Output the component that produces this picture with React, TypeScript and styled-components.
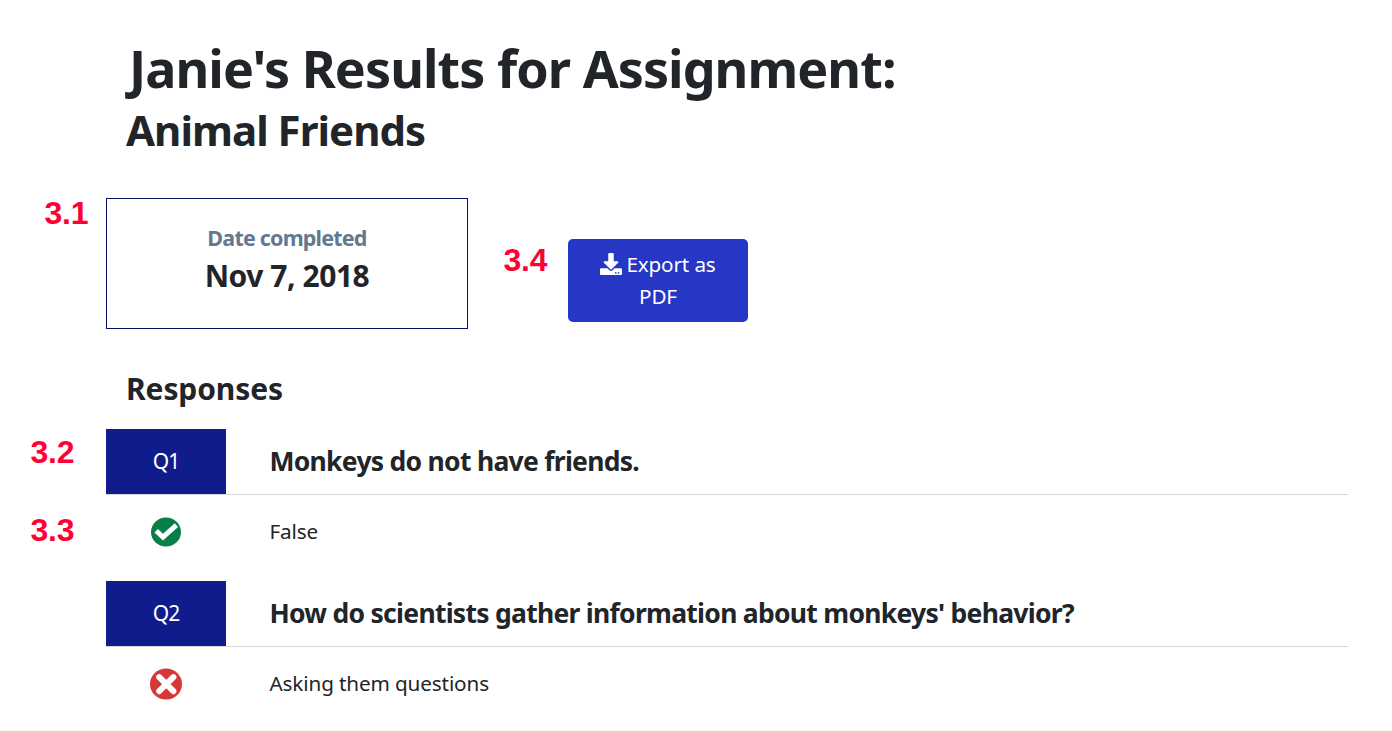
import React from "react";
import { FaDownload } from "react-icons/fa";
import styled, { createGlobalStyle } from "styled-components";

type Response = {
  id: string;
  question: string;
  answer: string;
  correct: boolean;
  questionNote?: string;
  answerNote?: string;
};

const responses: Response[] = [
  {
    id: "Q1",
    question: "Monkeys do not have friends.",
    answer: "False",
    correct: true,
    questionNote: "3.2",
    answerNote: "3.3",
  },
  {
    id: "Q2",
    question: "How do scientists gather information about monkeys' behavior?",
    answer: "Asking them questions",
    correct: false,
  },
];

const CorrectIcon = () => (
  <svg width="30" height="30" viewBox="0 0 30 30" fill="none">
    <ellipse cx="15" cy="15" rx="15" ry="14.6" fill="#087f46" />
    <path d="M5.2 13.8L12 20.2L25.4 8.2" stroke="#fff" strokeWidth="5" />
  </svg>
);

const IncorrectIcon = () => (
  <svg width="32" height="32" viewBox="0 0 32 32" fill="none">
    <ellipse cx="16" cy="16" rx="16" ry="15.6" fill="#d9363a" />
    <path d="M9.2 9.2L23.4 23.2M23.4 9.2L9.2 23.2" stroke="#fff" strokeWidth="6" strokeLinecap="round" />
  </svg>
);

const ResponseItem = ({ response }: { response: Response }) => (
  <Item>
    <Gutter $top={5} $left={30.5}>
      {response.questionNote && <Callout>{response.questionNote}</Callout>}
    </Gutter>
    <QuestionRow>
      <QuestionId>{response.id}</QuestionId>
      <Question>{response.question}</Question>
    </QuestionRow>
    <Gutter $top={17} $left={30.5}>
      {response.answerNote && <Callout>{response.answerNote}</Callout>}
    </Gutter>
    <AnswerRow>
      <Mark>{response.correct ? <CorrectIcon /> : <IncorrectIcon />}</Mark>
      <Answer>{response.answer}</Answer>
    </AnswerRow>
  </Item>
);

const App = () => (
  <>
    <GlobalStyle />
    <Page>
      <Title>Janie's Results for Assignment:</Title>
      <Subtitle>Animal Friends</Subtitle>
      <Summary>
        <Gutter $top={-3} $left={44.5}>
          <Callout>3.1</Callout>
        </Gutter>
        <DateCard>
          <DateLabel>Date completed</DateLabel>
          <DateValue>Nov 7, 2018</DateValue>
        </DateCard>
        <Gutter $top={44} $left={35.5}>
          <Callout>3.4</Callout>
        </Gutter>
        <ExportButton>
          <FaDownload />
          Export as PDF
        </ExportButton>
      </Summary>
      <SectionTitle>Responses</SectionTitle>
      {responses.map((response) => (
        <ResponseItem key={response.id} response={response} />
      ))}
    </Page>
  </>
);

const GlobalStyle = createGlobalStyle`
  * {
    box-sizing: border-box;
  }

  body {
    margin: 0;
    background: #fff;
    color: #212529;
    font-family: "Noto Sans", sans-serif;
  }
`;

const Page = styled.main`
  height: 731px;
  padding: 37px 44px 0 0;
  overflow: hidden;
`;

const Title = styled.h1`
  margin: 0 0 6px 129px;
  font-size: 52px;
  line-height: 62px;
  letter-spacing: -0.93px;
`;

const Subtitle = styled.h2`
  margin: 0 0 43px 126px;
  font-size: 42px;
  line-height: 50px;
  letter-spacing: -0.98px;
`;

const Summary = styled.section`
  display: grid;
  grid-template-columns: 106px 362px 100px 180px;
  height: 131px;
`;

const Gutter = styled.div<{ $top: number; $left: number }>`
  margin-top: ${({ $top }) => $top}px;
  padding-left: ${({ $left }) => $left}px;
`;

const Callout = styled.span`
  display: block;
  color: #ff0033;
  font: bold 32px/36px "Liberation Sans", sans-serif;
  letter-spacing: -0.2px;
`;

const DateCard = styled.div`
  padding-top: 23px;
  border: 1px solid #0a1160;
  text-align: center;
`;

const DateLabel = styled.div`
  margin-bottom: 2px;
  color: #64788f;
  font-size: 21.5px;
  font-weight: 700;
  line-height: 32px;
  letter-spacing: -0.8px;
`;

const DateValue = styled.div`
  font-size: 30px;
  font-weight: 700;
  line-height: 40px;
  letter-spacing: -0.45px;
`;

const ExportButton = styled.button`
  align-self: start;
  height: 83px;
  margin-top: 41px;
  padding: 0 30px 2px;
  border: 0;
  border-radius: 5px;
  background: #2537c4;
  color: #fff;
  font: 400 20.7px/32px "Noto Sans", sans-serif;
  letter-spacing: -0.15px;

  svg {
    width: 22px;
    height: 22px;
    margin-right: 4px;
    vertical-align: -3px;
  }
`;

const SectionTitle = styled.h3`
  margin: 40px 0 20px 126px;
  font-size: 30px;
  line-height: 40px;
  letter-spacing: -0.1px;
`;

const Item = styled.article`
  display: grid;
  grid-template-columns: 106px 1fr;
  grid-template-rows: 66px 86px;
`;

const QuestionRow = styled.div`
  display: grid;
  grid-template-columns: 120px 1fr;
  column-gap: 43.5px;
  border-bottom: 1px solid #d6d6d6;
`;

const QuestionId = styled.div`
  display: flex;
  align-items: center;
  justify-content: center;
  padding-bottom: 2px;
  background: #101c8c;
  color: #fff;
  font-size: 21px;
  letter-spacing: -1px;
`;

const Question = styled.div`
  display: flex;
  align-items: center;
  padding-bottom: 2px;
  font-size: 26.5px;
  font-weight: 700;
  letter-spacing: -0.72px;
`;

const AnswerRow = styled.div`
  display: grid;
  grid-template-columns: 120px 1fr;
  column-gap: 43.5px;
  align-items: center;
  height: 73px;
`;

const Mark = styled.div`
  display: flex;
  justify-content: center;
`;

const Answer = styled.div`
  padding-bottom: 1px;
  font-size: 20.7px;
  letter-spacing: -0.13px;
`;

export default App;
